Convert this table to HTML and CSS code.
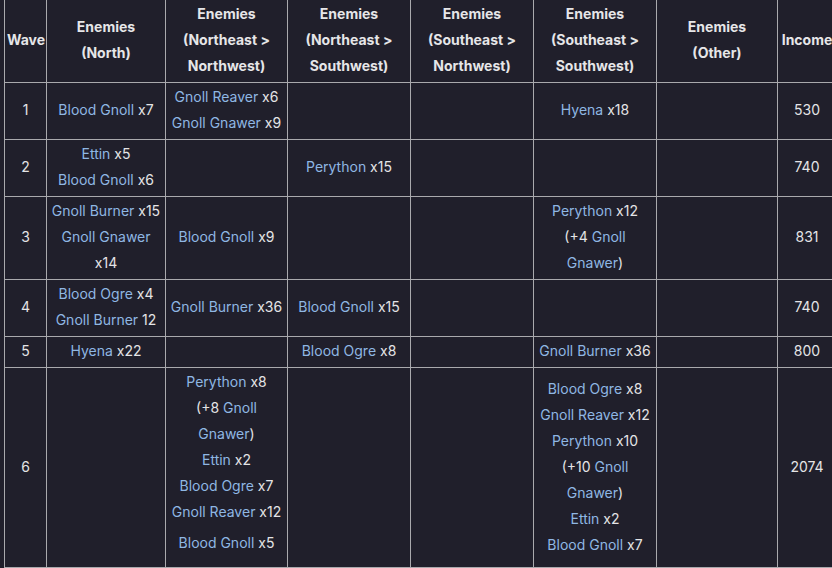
FILE: index.html
```html
<!DOCTYPE html>
<html>
<head>
<meta charset="utf-8">
<link rel="stylesheet" href="styles.css">
</head>
<body>
<table class="waves">
  <colgroup>
    <col class="c-wave"><col class="c-n"><col class="c-nenw"><col class="c-nesw"><col class="c-senw"><col class="c-sesw"><col class="c-other"><col class="c-inc">
  </colgroup>
  <thead>
    <tr>
      <th>Wave</th>
      <th>Enemies<br>(North)</th>
      <th>Enemies<br>(Northeast &gt; Northwest)</th>
      <th>Enemies<br>(Northeast &gt; Southwest)</th>
      <th>Enemies<br>(Southeast &gt; Northwest)</th>
      <th>Enemies<br>(Southeast &gt; Southwest)</th>
      <th>Enemies<br>(Other)</th>
      <th>Income</th>
    </tr>
  </thead>
  <tbody>
    <tr>
      <td>1</td>
      <td><a>Blood Gnoll</a> x7</td>
      <td><a>Gnoll Reaver</a> x6<br><a>Gnoll Gnawer</a> x9</td>
      <td></td>
      <td></td>
      <td><a>Hyena</a> x18</td>
      <td></td>
      <td>530</td>
    </tr>
    <tr>
      <td>2</td>
      <td><a>Ettin</a> x5<br><a>Blood Gnoll</a> x6</td>
      <td></td>
      <td><a>Perython</a> x15</td>
      <td></td>
      <td></td>
      <td></td>
      <td>740</td>
    </tr>
    <tr>
      <td>3</td>
      <td><a>Gnoll Burner</a> x15<br><a>Gnoll Gnawer</a> x14</td>
      <td><a>Blood Gnoll</a> x9</td>
      <td></td>
      <td></td>
      <td><a>Perython</a> x12<br>(+4 <a>Gnoll Gnawer</a>)</td>
      <td></td>
      <td>831</td>
    </tr>
    <tr>
      <td>4</td>
      <td><a>Blood Ogre</a> x4<br><a>Gnoll Burner</a> 12</td>
      <td><a>Gnoll Burner</a> x36</td>
      <td><a>Blood Gnoll</a> x15</td>
      <td></td>
      <td></td>
      <td></td>
      <td>740</td>
    </tr>
    <tr>
      <td>5</td>
      <td><a>Hyena</a> x22</td>
      <td></td>
      <td><a>Blood Ogre</a> x8</td>
      <td></td>
      <td><a>Gnoll Burner</a> x36</td>
      <td></td>
      <td>800</td>
    </tr>
    <tr>
      <td>6</td>
      <td></td>
      <td><a>Perython</a> x8<br>(+8 <a>Gnoll Gnawer</a>)<br><a>Ettin</a> x2<br><a>Blood Ogre</a> x7<br><a>Gnoll Reaver</a> x12<p class="last"><a>Blood Gnoll</a> x5</p></td>
      <td></td>
      <td></td>
      <td><a>Blood Ogre</a> x8<br><a>Gnoll Reaver</a> x12<br><a>Perython</a> x10<br>(+10 <a>Gnoll Gnawer</a>)<br><a>Ettin</a> x2<br><a>Blood Gnoll</a> x7</td>
      <td></td>
      <td>2074</td>
    </tr>
  </tbody>
</table>
</body>
</html>
```

FILE: styles.css
```css
html, body {
  margin: 0;
  padding: 0;
  overflow: hidden;
  background: #201f2b;
}
body {
  width: 832px;
  height: 568px;
  font-family: Inter, "Noto Sans", sans-serif;
  font-size: 14px;
  color: #e4e4e6;
}
.waves {
  border-collapse: collapse;
  table-layout: fixed;
  width: 832px;
  margin: -1px 0 0 4px;
  background: #201f2b;
}
.c-wave { width: 42px; }
.c-n { width: 119px; }
.c-nenw { width: 122px; }
.c-nesw { width: 123px; }
.c-senw { width: 123px; }
.c-sesw { width: 123px; }
.c-other { width: 121px; }
.c-inc { width: 59px; }
.waves th,
.waves td {
  border: 1px solid #a9a9ad;
  padding: 1px 4px 3px;
  line-height: 26px;
  text-align: center;
  vertical-align: middle;
}
.waves th {
  font-weight: 700;
  color: #e6e6e8;
}
.waves th:first-child,
.waves th:last-child {
  padding-left: 2px;
  padding-right: 2px;
}
.waves a {
  color: #8fb7e3;
  text-decoration: none;
}
.last {
  margin: 5px 0 8px;
}
```
